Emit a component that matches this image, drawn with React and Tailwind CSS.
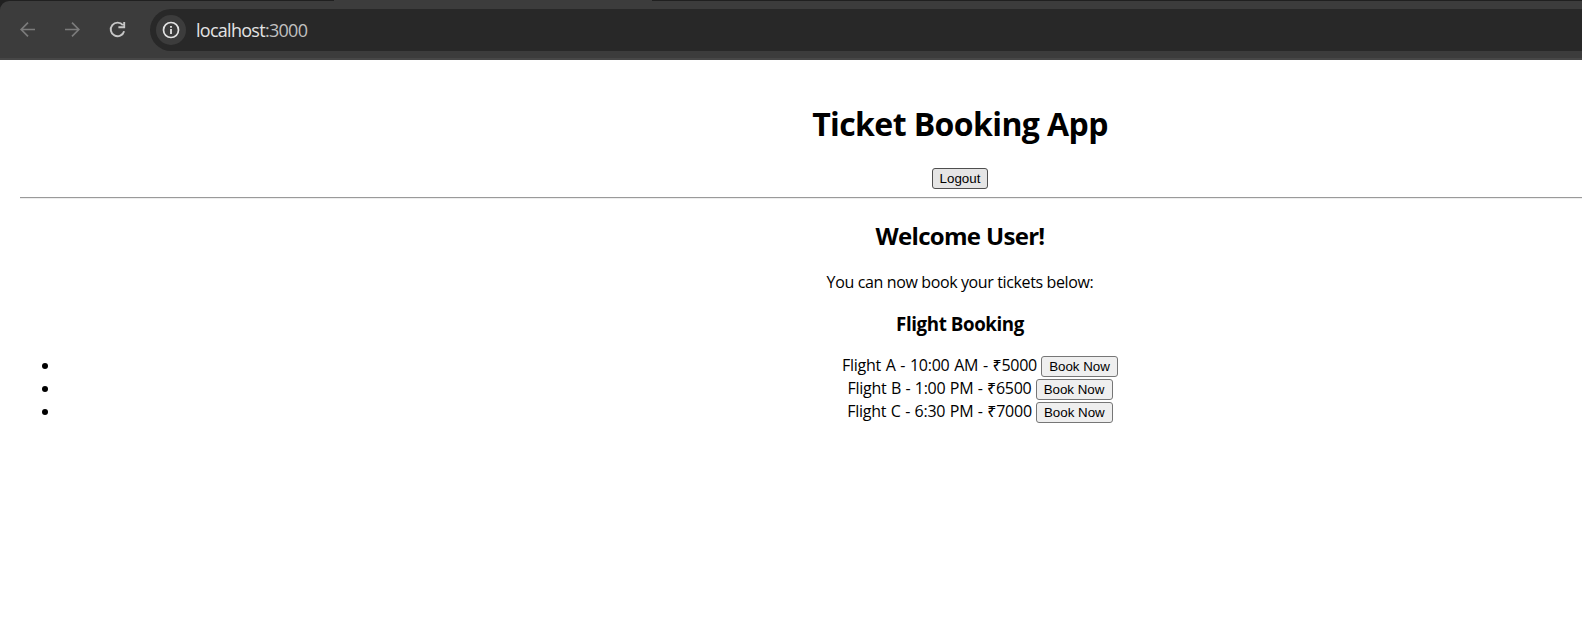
import React from 'react';

const flights = [
  { label: 'Flight A - 10:00 AM - ₹5000', text: 'tracking-[-0.25px] [word-spacing:0.8px]' },
  { label: 'Flight B - 1:00 PM - ₹6500', text: 'tracking-[-0.25px] [word-spacing:0.5px]' },
  { label: 'Flight C - 6:30 PM - ₹7000', text: 'tracking-[-0.25px] [word-spacing:0.65px]' },
];

function BrowserBar() {
  return (
    <header className="bg-[#202020] h-[60px] w-full flex flex-col">
      <div className="h-px flex shrink-0">
        <div className="w-[334px]" />
        <div className="w-[318px] bg-[#3c3c3c]" />
      </div>
      <div className="flex-1 bg-[#3c3c3c] rounded-tl-[9px] border-b-2 border-[#474747] flex items-start pt-2">
        <div className="w-[150px] h-[42px] shrink-0 flex items-center">
          <svg width="150" height="42" viewBox="0 0 150 42" fill="none" strokeWidth="1.7">
            <path d="M35 20.5H21.5M28 13.7L21.2 20.5L28 27.3" stroke="#7b7b7b" />
            <path d="M65 20.5H78.5M72 13.7L78.8 20.5L72 27.3" stroke="#7b7b7b" />
            <path d="M122.9 16.2A6.8 6.8 0 1 0 124.1 22.2M124.2 13V18.2H118.4" stroke="#c7c7c7" strokeWidth="1.9" />
          </svg>
        </div>
        <div className="flex-1 h-[42px] bg-[#282828] rounded-l-full flex items-center pl-1.5">
          <div className="size-[30px] rounded-full bg-[#3c3c3c] flex items-center justify-center">
            <svg width="18" height="18" viewBox="0 0 18 18" fill="none" stroke="#e3e3e3">
              <circle cx="9" cy="9" r="7.5" strokeWidth="1.7" />
              <path d="M9 8v5M9 5v1.8" strokeWidth="1.8" />
            </svg>
          </div>
          <span className="ml-[10px] text-[18px] leading-[24px] tracking-[-0.72px] text-[#e3e3e3]">
            localhost<span className="text-[#c0c0c0]">:3000</span>
          </span>
        </div>
      </div>
    </header>
  );
}

function Button({ children, className }) {
  return (
    <button className={`h-[21px] shrink-0 rounded-[3px] border text-[13.333px] leading-[19px] text-black font-['Liberation_Sans',Arial,sans-serif] ${className}`}>
      {children}
    </button>
  );
}

export default function App() {
  return (
    <div className="h-[621px] w-full overflow-hidden bg-white text-black font-['Open_Sans','Noto_Sans',sans-serif]">
      <BrowserBar />
      <main className="ml-5 w-[1880px] text-center text-[16px]">
        <h1 className="pt-[42px] text-[32px] leading-[43px] font-bold tracking-[-0.6px]">Ticket Booking App</h1>
        <div className="mt-[23px] flex justify-center">
          <Button className="w-14 bg-[#e5e5e5] border-[#4f4f4f]">Logout</Button>
        </div>
        <hr className="mt-2 h-0.5 border-t border-b border-t-[#9a9a9a] border-b-[#eeeeee]" />
        <h2 className="mt-[21px] text-[24px] leading-[32px] font-bold tracking-[-0.68px]">Welcome User!</h2>
        <p className="mt-5 text-[16px] leading-[21px] tracking-[-0.37px]">You can now book your tickets below:</p>
        <h3 className="mt-[18px] text-[18.72px] leading-[25px] font-bold tracking-[-0.4px]">Flight Booking</h3>
        <ul className="mt-[19px]">
          {flights.map((flight) => (
            <li key={flight.label} className="flex h-[23px] items-center">
              <span className="mb-[2px] ml-[22px] mr-3 size-1.5 rounded-full bg-black" />
              <div className="flex flex-1 items-center justify-center">
                <span className={`mb-[2px] mr-1 leading-[21px] whitespace-nowrap ${flight.text}`}>{flight.label}</span>
                <Button className="w-[77px] bg-[#efefef] border-[#767676]">Book Now</Button>
              </div>
            </li>
          ))}
        </ul>
      </main>
    </div>
  );
}
